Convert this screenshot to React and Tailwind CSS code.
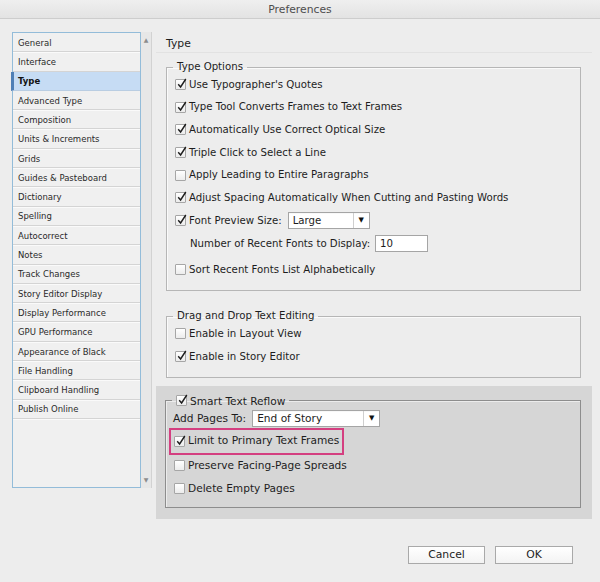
import React from 'react';

const Check = ({ checked }) => (
    <span className="relative inline-block w-[11px] h-[11px] shrink-0 border border-[#a6a6a6] bg-gradient-to-b from-white to-[#ececec] rounded-[1px]">
        {checked && (
            <svg className="absolute left-[1px] top-[-2px]" width="10" height="11" viewBox="0 0 10 11">
                <path d="M1.2 6.2 L3.6 9 L8.8 1" fill="none" stroke="#1e1e1e" strokeWidth="1.4" />
            </svg>
        )}
    </span>
);

const CheckRow = ({ checked, label, className = '' }) => (
    <div className={`flex items-center gap-[3px] h-[22.7px] pl-[8px] ${className}`}>
        <Check checked={checked} />
        <span>{label}</span>
    </div>
);

const Select = ({ value, className = '' }) => (
    <div className={`flex items-center h-[17px] bg-white border border-[#a5a5a5] shadow-[inset_0_1px_0_#f8f8f8] ${className}`}>
        <span className="flex-1 pl-[4px] leading-[15px]">{value}</span>
        <span className="h-full w-[16px] border-l border-[#cfcfcf] flex items-center justify-center text-[7px] text-[#111]">▼</span>
    </div>
);

const items = [
    'General', 'Interface', 'Type', 'Advanced Type', 'Composition', 'Units & Increments', 'Grids',
    'Guides & Pasteboard', 'Dictionary', 'Spelling', 'Autocorrect', 'Notes', 'Track Changes',
    'Story Editor Display', 'Display Performance', 'GPU Performance', 'Appearance of Black',
    'File Handling', 'Clipboard Handling', 'Publish Online',
];

export default function App() {
    return (
        <div className="w-[600px] h-[582px] bg-[#ededed] text-[#1d1d1d] text-[10.2px] font-['DejaVu_Sans',sans-serif] flex flex-col overflow-hidden">
            {/* Title bar */}
            <div className="h-[19px] shrink-0 bg-gradient-to-b from-[#efefef] to-[#e3e3e3] border-b border-[#cdcdcd] text-center leading-[19px] text-[10.8px] text-[#4d4d4d]">
                Preferences
            </div>

            <div className="flex pt-[13px]">
                {/* Category list */}
                <div className="ml-[12px] flex h-[456px]">
                    <div className="w-[129px] border border-[#93bcd9] bg-[#f0f0f0] text-[8.5px] text-[#2a2a2a]">
                        {items.map((item) => (
                            item === 'Type' ? (
                                <div key={item} className="h-[19.3px] -ml-[2px] border-l-[3px] border-l-[#4f7fb6] border-b border-b-[#b9cde2] bg-[#c6dcf4] pl-[4px] pt-[2px] flex items-center font-bold text-[#111]">
                                    {item}
                                </div>
                            ) : (
                                <div key={item} className="h-[19.3px] border-b border-[#d4d4d4] shadow-[0_1px_0_#fafafa] pl-[5px] pt-[2px] flex items-center">
                                    {item}
                                </div>
                            )
                        ))}
                    </div>
                    <div className="w-[11px] bg-[#e7e7e7] border-r border-[#d2d2d2] flex flex-col items-center justify-between py-[5px]">
                        <span className="text-[6px] leading-none text-[#8c8c8c]">▲</span>
                        <span className="text-[6px] leading-none text-[#8c8c8c]">▼</span>
                    </div>
                </div>

                {/* Right panel */}
                <div className="ml-[4px] w-[436px] flex flex-col">
                    <div className="mt-[2px] h-[19px] leading-[19px] pl-[10px] text-[10.8px] border-b border-[#e2e2e2]">
                        Type
                    </div>

                    <fieldset className="mt-[8px] ml-[10px] mr-[11px] border border-[#b6b6b6] shadow-[inset_1px_1px_0_#fafafa] pb-[9px]">
                        <legend className="ml-[6px] px-[4px] leading-[12px]">Type Options</legend>
                        <CheckRow checked label="Use Typographer's Quotes" />
                        <CheckRow checked label="Type Tool Converts Frames to Text Frames" />
                        <CheckRow checked label="Automatically Use Correct Optical Size" />
                        <CheckRow checked label="Triple Click to Select a Line" />
                        <CheckRow label="Apply Leading to Entire Paragraphs" />
                        <CheckRow checked label="Adjust Spacing Automatically When Cutting and Pasting Words" />
                        <div className="flex items-center h-[22.7px] pl-[8px]">
                            <Check checked />
                            <span className="ml-[3px]">Font Preview Size:</span>
                            <Select value="Large" className="ml-[6px] w-[82px]" />
                        </div>
                        <div className="flex items-center h-[22.7px] pl-[23px]">
                            <span>Number of Recent Fonts to Display:</span>
                            <div className="ml-[5px] w-[53px] h-[17px] bg-white border border-[#a5a5a5] pl-[4px] leading-[15px]">10</div>
                        </div>
                        <CheckRow label="Sort Recent Fonts List Alphabetically" className="mt-[4px]" />
                    </fieldset>

                    <fieldset className="mt-[19px] ml-[10px] mr-[11px] border border-[#b6b6b6] shadow-[inset_1px_1px_0_#fafafa] pb-[9px]">
                        <legend className="ml-[6px] px-[4px] leading-[12px]">Drag and Drop Text Editing</legend>
                        <CheckRow label="Enable in Layout View" />
                        <CheckRow checked label="Enable in Story Editor" />
                    </fieldset>

                    <div className="mt-[8px] bg-[#d6d6d6] pt-[8px] pl-[9px] pr-[11px] pb-[11px]">
                        <fieldset className="border border-[#8d8d8d] shadow-[inset_1px_1px_0_#ececec] pb-[7px]">
                            <legend className="ml-[6px] px-[4px] leading-[14px] flex items-center gap-[3px]">
                                <Check checked />
                                <span className="text-[10.6px]">Smart Text Reflow</span>
                            </legend>
                            <div className="flex items-end h-[20px] pl-[7px] pb-[1px] text-[10.6px]">
                                <span className="leading-[17px]">Add Pages To:</span>
                                <Select value="End of Story" className="ml-[6px] w-[128px]" />
                            </div>
                            <div className="ml-[3px] w-[175px] h-[27px] border-2 border-[#d43f80] flex items-center gap-[3px] pl-[3px] text-[10.6px]">
                                <Check checked />
                                <span>Limit to Primary Text Frames</span>
                            </div>
                            <CheckRow label="Preserve Facing-Page Spreads" className="text-[10.6px]" />
                            <CheckRow label="Delete Empty Pages" className="text-[10.6px]" />
                        </fieldset>
                    </div>
                </div>
            </div>

            {/* Buttons */}
            <div className="flex justify-end gap-[10px] pr-[27px] mt-[27px]">
                <button className="w-[77px] h-[18px] bg-gradient-to-b from-white to-[#f3f3f3] border border-[#a9a9a9] text-[10.8px] leading-[16px]">Cancel</button>
                <button className="w-[78px] h-[18px] bg-gradient-to-b from-white to-[#f3f3f3] border border-[#a9a9a9] text-[10.8px] leading-[16px]">OK</button>
            </div>
        </div>
    );
}
